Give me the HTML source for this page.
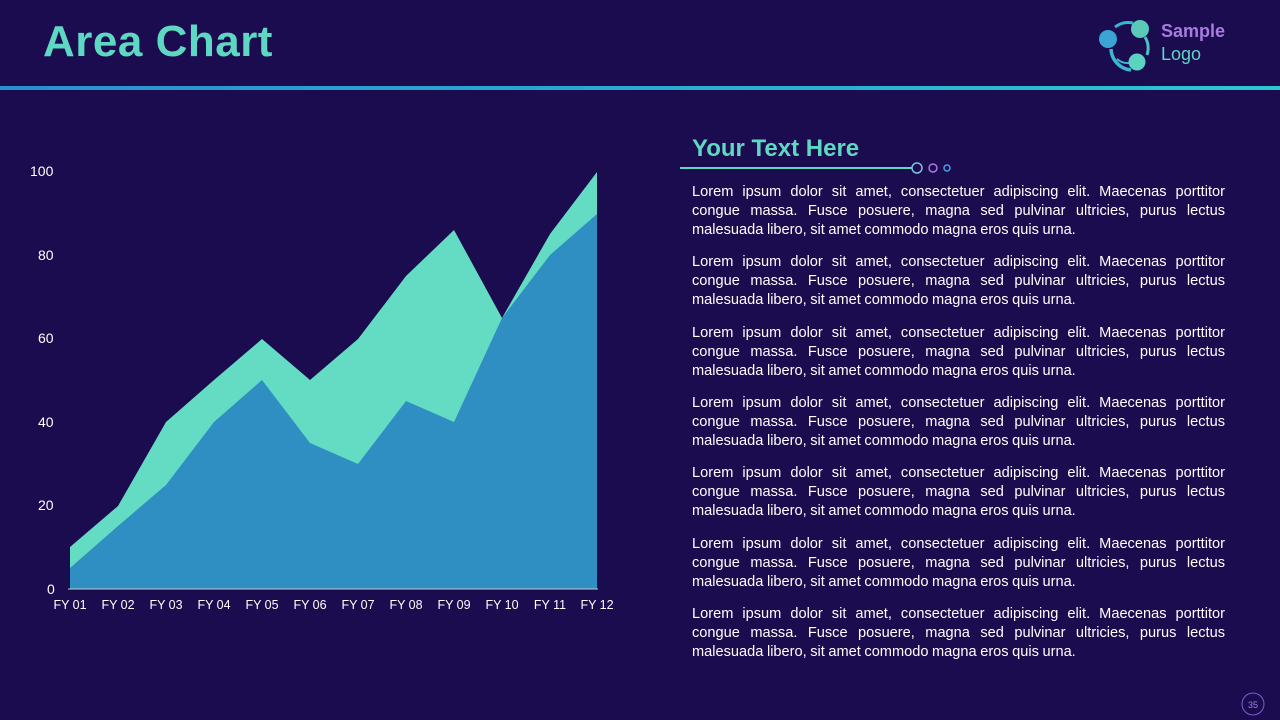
<!DOCTYPE html>
<html><head><style>
body{margin:0;width:1280px;height:720px;background:#1b0b4f;font-family:"Liberation Sans",sans-serif;position:relative;overflow:hidden}
.t{position:absolute;left:43px;top:17px;font-size:44px;font-weight:bold;color:#5fd8c3;letter-spacing:0.5px}
.bar{position:absolute;left:0;top:86px;width:1280px;height:4px;background:linear-gradient(90deg,#2a8fd0,#2bc7d3)}
.h{position:absolute;left:692px;top:135px;font-size:24px;font-weight:bold;color:#5fd8c3}
.p{position:absolute;left:692px;width:533px;font-size:14.6px;line-height:19.2px;color:#fff;text-align:justify;word-spacing:-0.5px}
.ax{position:absolute;color:#fff;font-size:14px}
.fx{position:absolute;top:598px;color:#fff;font-size:12.5px;width:50px;text-align:center}
</style></head><body>
<div class="t">Area Chart</div>
<div class="bar"></div>
<svg style="position:absolute;left:1095px;top:15px" width="60" height="60">
<path d="M16 34 A22 22 0 0 0 36 55" stroke="#3db4d0" stroke-width="3.5" fill="none"/>
<path d="M20 12 A22 22 0 0 1 38 8" stroke="#3db4d0" stroke-width="3" fill="none"/>
<path d="M50 22 A22 22 0 0 1 52 40" stroke="#4cc0c8" stroke-width="3" fill="none"/>
<path d="M22 44 A16 16 0 0 0 34 48" stroke="#3db4d0" stroke-width="2" fill="none"/>
<circle cx="13" cy="24" r="9" fill="#3aa4d4"/><circle cx="45" cy="14" r="9" fill="#5cc8b8"/><circle cx="42" cy="47" r="8.5" fill="#5ad3bf"/>
</svg>
<div style="position:absolute;left:1161px;top:21px;font-size:18px;font-weight:bold;color:#a77be0">Sample</div>
<div style="position:absolute;left:1161px;top:44px;font-size:18px;color:#5fd8c3">Logo</div>
<div class="ax" style="left:30px;top:163px">100</div>
<div class="ax" style="left:38px;top:247px">80</div>
<div class="ax" style="left:38px;top:330px">60</div>
<div class="ax" style="left:38px;top:414px">40</div>
<div class="ax" style="left:38px;top:497px">20</div>
<div class="ax" style="left:47px;top:581px">0</div>
<svg style="position:absolute;left:0;top:0" width="1280" height="720">
<polygon fill="#63dcc3" points="70,589 70,547 118,506 166,422 214,380 262,339 310,380 358,339 406,276 454,230 502,318 550,234 597,172 597,589"/>
<polygon fill="#2f8ec2" points="70,589 70,568 118,526 166,485 214,422 262,380 310,443 358,464 406,401 454,422 502,318 550,255 597,214 597,589"/>
<line x1="68" y1="589" x2="598" y2="589" stroke="#ccc" stroke-width="1"/>
<line x1="680" y1="168" x2="912" y2="168" stroke="#5fd8c3" stroke-width="2"/>
<circle cx="917" cy="168" r="5" fill="none" stroke="#7fc0e0" stroke-width="1.5"/>
<circle cx="933" cy="168" r="4" fill="none" stroke="#a77be0" stroke-width="1.5"/>
<circle cx="947" cy="168" r="3" fill="none" stroke="#4aa0e0" stroke-width="1.5"/>
<circle cx="1253" cy="704" r="11" fill="none" stroke="#7a5fd0" stroke-width="1"/>
<text x="1253" y="708" fill="#a080e0" font-size="9" text-anchor="middle" font-family="Liberation Sans">35</text>
</svg>
<div class="fx" style="left:45px">FY 01</div><div class="fx" style="left:93px">FY 02</div><div class="fx" style="left:141px">FY 03</div><div class="fx" style="left:189px">FY 04</div><div class="fx" style="left:237px">FY 05</div><div class="fx" style="left:285px">FY 06</div><div class="fx" style="left:333px">FY 07</div><div class="fx" style="left:381px">FY 08</div><div class="fx" style="left:429px">FY 09</div><div class="fx" style="left:477px">FY 10</div><div class="fx" style="left:525px">FY 11</div><div class="fx" style="left:572px">FY 12</div>
<div class="h">Your Text Here</div>
<div class="p" style="top:183px">Lorem ipsum dolor sit amet, consectetuer adipiscing elit. Maecenas porttitor congue massa. Fusce posuere, magna sed pulvinar ultricies, purus lectus malesuada libero, sit amet commodo magna eros quis urna.</div>
<div class="p" style="top:253px">Lorem ipsum dolor sit amet, consectetuer adipiscing elit. Maecenas porttitor congue massa. Fusce posuere, magna sed pulvinar ultricies, purus lectus malesuada libero, sit amet commodo magna eros quis urna.</div>
<div class="p" style="top:324px">Lorem ipsum dolor sit amet, consectetuer adipiscing elit. Maecenas porttitor congue massa. Fusce posuere, magna sed pulvinar ultricies, purus lectus malesuada libero, sit amet commodo magna eros quis urna.</div>
<div class="p" style="top:394px">Lorem ipsum dolor sit amet, consectetuer adipiscing elit. Maecenas porttitor congue massa. Fusce posuere, magna sed pulvinar ultricies, purus lectus malesuada libero, sit amet commodo magna eros quis urna.</div>
<div class="p" style="top:464px">Lorem ipsum dolor sit amet, consectetuer adipiscing elit. Maecenas porttitor congue massa. Fusce posuere, magna sed pulvinar ultricies, purus lectus malesuada libero, sit amet commodo magna eros quis urna.</div>
<div class="p" style="top:535px">Lorem ipsum dolor sit amet, consectetuer adipiscing elit. Maecenas porttitor congue massa. Fusce posuere, magna sed pulvinar ultricies, purus lectus malesuada libero, sit amet commodo magna eros quis urna.</div>
<div class="p" style="top:605px">Lorem ipsum dolor sit amet, consectetuer adipiscing elit. Maecenas porttitor congue massa. Fusce posuere, magna sed pulvinar ultricies, purus lectus malesuada libero, sit amet commodo magna eros quis urna.</div>
</body></html>
